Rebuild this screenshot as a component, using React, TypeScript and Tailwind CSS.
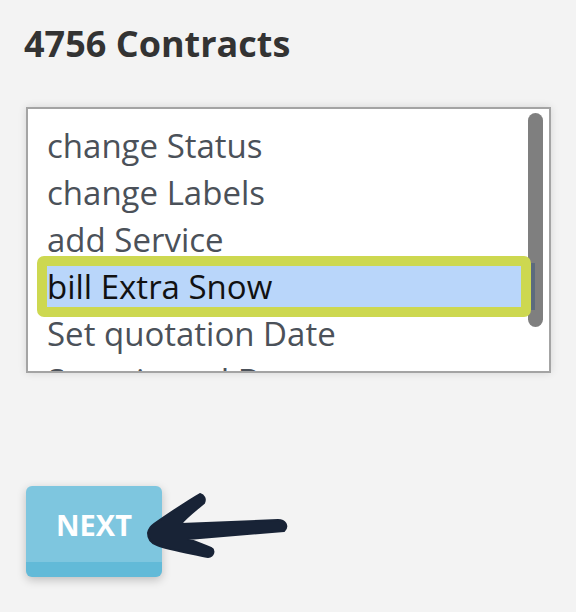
const actions = [
  'change Status',
  'change Labels',
  'add Service',
  'bill Extra Snow',
  'Set quotation Date',
  'Set rejected Date',
  'Set invoiced Date',
]

const selectedAction = 'bill Extra Snow'

function ArrowMark() {
  // hand drawn annotation arrow pointing at the button
  return (
    <svg
      className="pointer-events-none absolute inset-0"
      width={576}
      height={612}
      viewBox="0 0 576 612"
    >
      <path
        d="M200 494 C204 495 206 499 204 503 C196 510 186 517 181 524 L278 520 C285 520 289 526 284 531 L188 539 C196 542 204 545 211 548 C215 550 214 556 208 557 C190 553 170 550 157 545 C151 543 148 539 148 533 C149 528 151 526 154 524 C170 513 186 502 200 494 Z"
        fill="#182336"
        stroke="#182336"
        strokeWidth={2}
        strokeLinejoin="round"
      />
    </svg>
  )
}

export default function App() {
  return (
    <div className="relative h-[612px] w-[576px] overflow-hidden bg-[#f3f3f3] font-['Open_Sans',sans-serif]">
      <div className="flex flex-col pl-[24px] pt-[19px]">
        <h1 className="text-[36px] font-bold leading-[49px] text-[#333333]">4756 Contracts</h1>

        <div className="relative ml-[2px] mt-[39px] h-[266px] w-[525px] overflow-hidden border-2 border-[#a4a4a4] bg-white shadow-[0_0_8px_rgba(0,0,0,0.12)]">
          <ul className="pt-[13px]">
            {actions.map((action) => {
              const selected = action === selectedAction
              return (
                <li
                  key={action}
                  className={
                    selected
                      ? 'ml-[19px] mr-[14px] h-[47px] whitespace-nowrap bg-[#b9d6fa] text-[33px] leading-[47px] text-[#111111]'
                      : 'ml-[19px] mr-[14px] h-[47px] whitespace-nowrap text-[33px] leading-[47px] text-[#4b5159]'
                  }
                >
                  {action}
                </li>
              )
            })}
          </ul>

          <div className="absolute left-[500px] top-[4px] h-[214px] w-[15px] rounded-full bg-black/50" />

          <div className="absolute left-[9px] top-[147px] h-[61px] w-[494px] rounded-[7px] border-[10px] border-[#cdd850]" />
        </div>

        <button className="ml-[2px] mt-[113px] flex h-[91px] w-[136px] items-center justify-center rounded-[6px] border-b-[15px] border-[#62bad8] bg-[#7ec6df] pt-[2px] text-[29px] font-bold text-white shadow-[0_3px_10px_rgba(0,0,0,0.22)]">
          NEXT
        </button>
      </div>

      <ArrowMark />
    </div>
  )
}
